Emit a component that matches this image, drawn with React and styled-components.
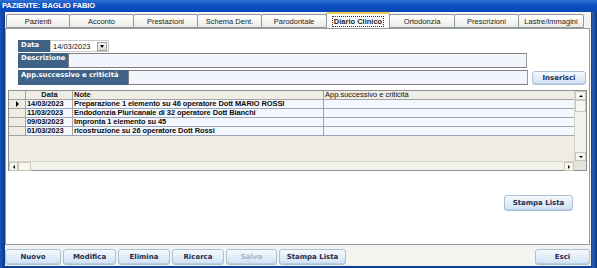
import React from "react";
import styled, { createGlobalStyle } from "styled-components";

const GlobalStyle = createGlobalStyle`
  html, body {
    margin: 0;
    padding: 0;
    background: #0d3f8f;
  }
  * { box-sizing: border-box; }
`;

const tabs = [
  "Pazienti",
  "Acconto",
  "Prestazioni",
  "Schema Dent.",
  "Parodontale",
  "Diario Clinico",
  "Ortodonzia",
  "Prescrizioni",
  "Lastre/Immagini",
];

const rows = [
  { data: "14/03/2023", note: "Preparazione 1 elemento su 46 operatore Dott MARIO ROSSI", current: true },
  { data: "11/03/2023", note: "Endodonzia Pluricanale di 32 operatore Dott Bianchi" },
  { data: "09/03/2023", note: "Impronta 1 elemento su 45" },
  { data: "01/03/2023", note: "ricostruzione su 26 operatore Dott Rossi" },
];

const footerButtons = [
  { label: "Nuovo", w: 56 },
  { label: "Modifica", w: 53 },
  { label: "Elimina", w: 52 },
  { label: "Ricerca", w: 52 },
  { label: "Salva", w: 51, disabled: true },
  { label: "Stampa Lista", w: 67 },
];

const Window = styled.div`
  width: 597px;
  height: 268px;
  display: flex;
  flex-direction: column;
  background: linear-gradient(90deg, #1a55b8 0, #0c3f94 4px, #0c3f94 591px, #2a62b8 593px, #0b347a 597px);
  padding: 0 6px 2px 5px;
  overflow: hidden;
  font-family: "DejaVu Sans", "Liberation Sans", sans-serif;
`;

const TitleBar = styled.div`
  height: 12px;
  margin: 0 -6px 0 -5px;
  padding-left: 2px;
  background: linear-gradient(180deg, #2f6fd4 0%, #0a4fc4 45%, #0846b4 100%);
  color: #ffffff;
  font-family: "Liberation Sans", sans-serif;
  font-weight: bold;
  font-size: 7.5px;
  line-height: 12px;
  letter-spacing: -0.1px;
`;

const Body = styled.div`
  flex: 1;
  display: flex;
  flex-direction: column;
  background: #f3f3ef;
`;

const TabRow = styled.div`
  height: 16px;
  display: flex;
  align-items: flex-end;
  padding-left: 1px;
`;

const Tab = styled.div`
  width: ${(p) => p.$w}px;
  height: ${(p) => (p.$active ? 16 : 14)}px;
  display: flex;
  align-items: center;
  justify-content: center;
  font-family: "Liberation Sans", sans-serif;
  font-size: 7.5px;
  font-weight: ${(p) => (p.$active ? "bold" : "normal")};
  color: #1a1a1a;
  background: ${(p) => (p.$active ? "#fcfcfe" : "linear-gradient(180deg, #ffffff 0%, #f4f4f0 60%, #e8e8e2 100%)")};
  border: 1px solid #919b9c;
  border-bottom: ${(p) => (p.$active ? "none" : "1px solid #919b9c")};
  border-top: ${(p) => (p.$active ? "2px solid #f0c850" : "1px solid #919b9c")};
  border-radius: 2px 2px 0 0;
  margin-right: -1px;
  position: relative;
  z-index: ${(p) => (p.$active ? 2 : 1)};
  span {
    outline: ${(p) => (p.$active ? "1px dotted #333" : "none")};
    padding: 0 1px;
  }
`;

const Panel = styled.div`
  height: 217px;
  margin-right: 1px;
  background: #ffffff;
  border: 1px solid #919b9c;
  display: flex;
  flex-direction: column;
  padding: 11px 2px 0 2px;
`;

const Form = styled.div`
  display: flex;
  flex-direction: column;
  padding-left: 10px;
`;

const FormRow = styled.div`
  display: flex;
  align-items: stretch;
  height: ${(p) => p.$h}px;
  margin-bottom: ${(p) => p.$mb || 0}px;
`;

const Label = styled.div`
  width: ${(p) => p.$w}px;
  background: #3e6386;
  color: #ffffff;
  font-family: "DejaVu Sans", sans-serif;
  font-weight: bold;
  font-size: 6.8px;
  padding: 1px 0 0 3px;
  line-height: 9px;
  white-space: nowrap;
  overflow: hidden;
`;

const Combo = styled.div`
  width: 59px;
  display: flex;
  align-items: center;
  justify-content: space-between;
  background: #ffffff;
  border: 1px solid #c8c8c8;
  padding: 0 1px 0 2px;
  font-family: "Liberation Sans", sans-serif;
  font-size: 7.5px;
  color: #111;
`;

const DropButton = styled.div`
  width: 10px;
  height: 9px;
  background: linear-gradient(180deg, #f6f6f4, #dcdcd6);
  border: 1px solid #a0a0a0;
  display: flex;
  align-items: center;
  justify-content: center;
  &::after {
    content: "";
    border-left: 2.5px solid transparent;
    border-right: 2.5px solid transparent;
    border-top: 3px solid #000;
  }
`;

const TextBox = styled.div`
  width: ${(p) => p.$w}px;
  background: #f2f5fc;
  border: 1px solid #7f7f7f;
  border-right-color: #9a9a9a;
`;

const Button = styled.div`
  width: ${(p) => p.$w}px;
  height: ${(p) => p.$h || 16}px;
  display: flex;
  align-items: center;
  justify-content: center;
  background: linear-gradient(180deg, #f6f9fd 0%, #e4eef9 45%, #cfe0f3 100%);
  border: 1px solid #a9bfd6;
  border-radius: 3px;
  font-family: "DejaVu Sans", sans-serif;
  font-weight: bold;
  font-size: 7px;
  color: ${(p) => (p.$disabled ? "#a7b7c9" : "#1f2d4c")};
  box-shadow: inset 0 -1px 0 #b9cde3;
  flex-shrink: 0;
`;

const InsertWrap = styled.div`
  margin-left: 4px;
  padding-top: 1px;
`;

const GridFrame = styled.div`
  margin-top: 5px;
  height: 81px;
  border: 1px solid #8e8e8e;
  display: grid;
  grid-template-columns: 1fr 12px;
  grid-template-rows: 1fr 9px;
  background: #efede3;
`;

const Table = styled.div`
  display: grid;
  grid-template-columns: 17px 47px 251px 252px;
  grid-auto-rows: 9px;
  align-content: start;
  font-family: "Liberation Sans", sans-serif;
  font-size: 7.5px;
  line-height: 8px;
  overflow: hidden;
`;

const HeadCell = styled.div`
  background: #efede3;
  border-right: 1px solid #a2a2a2;
  border-bottom: 1px solid #a2a2a2;
  font-weight: ${(p) => (p.$bold ? "bold" : "normal")};
  text-align: ${(p) => (p.$center ? "center" : "left")};
  padding-left: 1px;
  color: #111;
  white-space: nowrap;
`;

const Indicator = styled.div`
  background: #efede3;
  border-right: 1px solid #a2a2a2;
  border-bottom: 1px solid #a2a2a2;
  display: flex;
  align-items: center;
  justify-content: center;
  &::after {
    content: "";
    display: ${(p) => (p.$current ? "block" : "none")};
    border-top: 3px solid transparent;
    border-bottom: 3px solid transparent;
    border-left: 3px solid #000;
  }
`;

const Cell = styled.div`
  background: #f4f7fd;
  border-right: 1px solid #a2a2a2;
  border-bottom: 1px solid #9aa6ba;
  font-weight: ${(p) => (p.$bold ? "bold" : "normal")};
  padding-left: 1px;
  color: #0d0d0d;
  white-space: nowrap;
  overflow: hidden;
  letter-spacing: -0.1px;
`;

const VScroll = styled.div`
  display: flex;
  flex-direction: column;
  justify-content: space-between;
  background: #f3f2ea;
  border-left: 1px solid #d8d6cc;
`;

const HScroll = styled.div`
  display: flex;
  align-items: stretch;
  background: #f3f2ea;
  border-top: 1px solid #d8d6cc;
`;

const ArrowBtn = styled.div`
  width: ${(p) => p.$w || 11}px;
  height: ${(p) => p.$h || 9}px;
  background: #f6f5ef;
  border: 1px solid #c9c7bb;
  display: flex;
  align-items: center;
  justify-content: center;
  &::after {
    content: "";
    ${(p) =>
      p.$dir === "up"
        ? "border-left: 2px solid transparent; border-right: 2px solid transparent; border-bottom: 2px solid #000;"
        : p.$dir === "down"
        ? "border-left: 2px solid transparent; border-right: 2px solid transparent; border-top: 2px solid #000;"
        : p.$dir === "left"
        ? "border-top: 2px solid transparent; border-bottom: 2px solid transparent; border-right: 2px solid #000;"
        : p.$dir === "right"
        ? "border-top: 2px solid transparent; border-bottom: 2px solid transparent; border-left: 2px solid #000;"
        : ""}
  }
`;

const Thumb = styled.div`
  width: ${(p) => p.$w || 11}px;
  height: ${(p) => p.$h || 9}px;
  background: #f7f6f1;
  border: 1px solid #c9c7bb;
`;

const VScrollTop = styled.div`
  display: flex;
  flex-direction: column;
`;

const HTrack = styled.div`
  flex: 1;
  display: flex;
  justify-content: flex-end;
`;

const Corner = styled.div`
  background: #e6e4da;
`;

const PrintRow = styled.div`
  display: flex;
  justify-content: flex-end;
  padding: 24px 14px 0 0;
`;

const Footer = styled.div`
  flex: 1;
  display: flex;
  align-items: center;
  gap: 2px;
  padding: 3px 1px 0 0;
`;

const Spacer = styled.div`
  flex: 1;
`;

export default function App() {
  const tabWidths = [64, 65, 65, 65, 66, 64, 66, 65, 66];
  return (
    <>
      <GlobalStyle />
      <Window>
        <TitleBar>PAZIENTE: BAGLIO FABIO</TitleBar>
        <Body>
          <TabRow>
            {tabs.map((t, i) => (
              <Tab key={t} $w={tabWidths[i]} $active={t === "Diario Clinico"}>
                <span>{t}</span>
              </Tab>
            ))}
          </TabRow>
          <Panel>
            <Form>
              <FormRow $h={12} $mb={1}>
                <Label $w={32}>Data</Label>
                <Combo>
                  14/03/2023
                  <DropButton />
                </Combo>
              </FormRow>
              <FormRow $h={15} $mb={2}>
                <Label $w={50}>Descrizione</Label>
                <TextBox $w={459} />
              </FormRow>
              <FormRow $h={15}>
                <Label $w={110}>App.successivo e criticità</Label>
                <TextBox $w={400} />
                <InsertWrap>
                  <Button $w={54} $h={14}>Inserisci</Button>
                </InsertWrap>
              </FormRow>
            </Form>
            <GridFrame>
              <Table>
                <Indicator />
                <HeadCell $bold $center>Data</HeadCell>
                <HeadCell $bold>Note</HeadCell>
                <HeadCell>App.successivo e criticità</HeadCell>
                {rows.map((r) => (
                  <React.Fragment key={r.data}>
                    <Indicator $current={r.current} />
                    <Cell $bold>{r.data}</Cell>
                    <Cell $bold>{r.note}</Cell>
                    <Cell />
                  </React.Fragment>
                ))}
              </Table>
              <VScroll>
                <VScrollTop>
                  <ArrowBtn $dir="up" />
                  <Thumb $h={12} />
                </VScrollTop>
                <ArrowBtn $dir="down" />
              </VScroll>
              <HScroll>
                <ArrowBtn $dir="left" $w={9} />
                <Thumb $w={13} />
                <HTrack>
                  <ArrowBtn $dir="right" $w={10} />
                </HTrack>
              </HScroll>
              <Corner />
            </GridFrame>
            <PrintRow>
              <Button $w={69}>Stampa Lista</Button>
            </PrintRow>
          </Panel>
          <Footer>
            {footerButtons.map((b) => (
              <Button key={b.label} $w={b.w} $disabled={b.disabled}>
                {b.label}
              </Button>
            ))}
            <Spacer />
            <Button $w={55}>Esci</Button>
          </Footer>
        </Body>
      </Window>
    </>
  );
}
